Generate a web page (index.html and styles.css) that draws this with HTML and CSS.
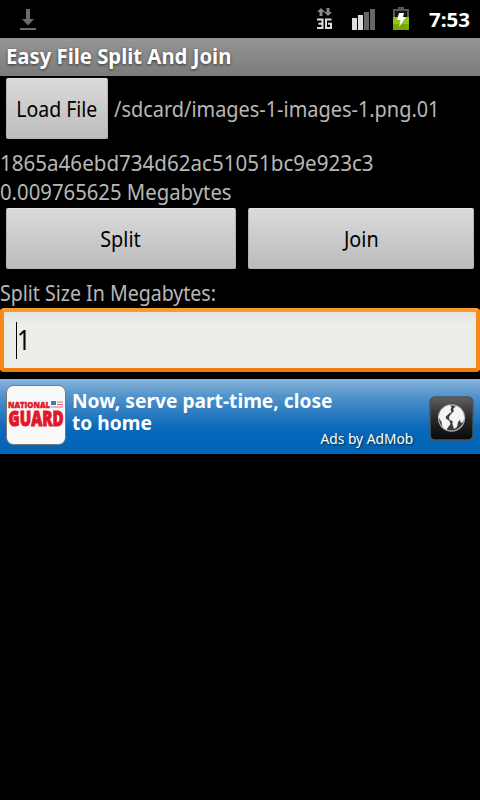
FILE: index.html
```
<!DOCTYPE html>
<html lang="en">
<head>
<meta charset="utf-8">
<title>Easy File Split And Join</title>
<link rel="stylesheet" href="styles.css">
</head>
<body>
<div class="screen">
  <header class="status">
    <svg class="download" width="18" height="22" viewBox="0 0 18 22"><path d="M7 0h4v10h4l-6 6.500L3 10h4zM1 19h16v2H1z" fill="#6b6b6b"/></svg>
    <div class="indicators">
      <svg width="18" height="24" viewBox="0 0 18 24"><path d="M5 1l4 4H6.500v4h-3V5H1zM12 9l4-4h-2.500V1h-3v4H8z" fill="#888"/><path d="M1 12.500h5.500v8.500H1M2.500 16.700h4M15.500 12.500H10V21h5v-4.300H12" fill="none" stroke="#ddd" stroke-width="2"/></svg>
      <svg width="24" height="22" viewBox="0 0 24 22"><path d="M1 9h5v12H1zM7 6h5v15H7z" fill="#ddd"/><path d="M13 3h5v18h-5zM19 0h5v21h-5z" fill="#666"/></svg>
      <svg width="18" height="24" viewBox="0 0 18 24"><path d="M6 0h6v2h5v21H1V2h5z" fill="#555"/><path d="M3 4h12v6H3z" fill="#111"/><path d="M1 10h16v13H1z" fill="#8fc412"/><path d="M1 17h16v6H1z" fill="#75a800"/><path d="M7 6h5l-1 4h3l-7 10 1.500-7H5z" fill="#fff"/></svg>
      <span class="clock"><span class="t">7:53</span></span>
    </div>
  </header>
  <h1 class="titlebar"><span class="t">Easy File Split And Join</span></h1>
  <div class="file-row">
    <button class="btn load"><span class="t">Load File</span></button>
    <span class="path t">/sdcard/images-1-images-1.png.01</span>
  </div>
  <div class="line hash"><span class="t">1865a46ebd734d62ac51051bc9e923c3</span></div>
  <div class="line size"><span class="t">0.009765625 Megabytes</span></div>
  <div class="actions">
    <button class="btn split"><span class="t">Split</span></button>
    <button class="btn join"><span class="t">Join</span></button>
  </div>
  <div class="line label"><span class="t">Split Size In Megabytes:</span></div>
  <div class="field"><i class="caret"></i><span class="t">1</span></div>
  <div class="ad">
    <svg class="logo" width="60" height="60" viewBox="0 0 60 60"><rect x=".5" y=".5" width="59" height="59" rx="7" fill="#f9f9f9" stroke="#777"/>
      <g fill="#e0172b" stroke="#e0172b" font-family="Open Sans, sans-serif" font-weight="800"><text x="2" y="23" font-size="9.500" stroke-width=".5" textLength="42" lengthAdjust="spacingAndGlyphs">NATIONAL</text><text x="2.500" y="41" font-size="21" stroke-width="1" textLength="55" lengthAdjust="spacingAndGlyphs">GUARD</text></g>
      <path d="M45 16h5v4h-5z" fill="#3f7fa5"/><path d="M51 17h6M51 19.500h6M45 22h12" stroke="#e26a76"/></svg>
    <div class="copy">
      <div class="headline"><span class="t">Now, serve part-time, close</span><br><span class="t second">to home</span></div>
      <div class="credit"><span class="t">Ads by AdMob</span></div>
    </div>
    <svg class="globe" width="45" height="45" viewBox="0 0 45 45"><defs><linearGradient id="g" x2="0" y2="1"><stop stop-color="#606060"/><stop offset=".5" stop-color="#282828"/><stop offset="1" stop-color="#080808"/></linearGradient></defs><rect x="1" y="1" width="43" height="43" rx="5" fill="url(#g)" stroke="#505458" stroke-width="1.500"/><circle cx="22.500" cy="22" r="13" fill="#3c3c3c" stroke="#aaa" stroke-width="1.300"/><path d="M9.500 21l2-6 4-4 5-2 2 2-1 3 1 2-3 2-3 3 1 2 3 2 1 3-3 4-1 2-4-3-1-5zM22 18l3-3-1-2 3-3 4 2 3 4 1.500 6-1.500 4-2 1-1-3-2 2-1 5-3 2-1.500-5v-3l-3-1-.5-3z" fill="#f4f4f4"/></svg>
  </div>
</div>
</body>
</html>
```
FILE: styles.css
```
* { box-sizing: border-box; }
body { margin: 0; background: #000; }
.screen {
  width: 480px;
  height: 800px;
  overflow: hidden;
  background: #000;
  color: #b8b8b8;
  font: 22px/29px "Noto Sans", "Open Sans", sans-serif;
}
.t { display: inline-block; white-space: nowrap; transform-origin: 0 50%; transform: scaleX(.9); }
.status { height: 38px; display: flex; justify-content: space-between; padding: 7px 9px 0 19px; }
.download { margin-top: 2px; }
.indicators { display: flex; align-items: flex-start; }
.indicators svg:nth-child(1) { margin-right: 17px; }
.indicators svg:nth-child(2) { margin: 2px 17px 0 0; }
.indicators svg:nth-child(3) { margin-right: 19px; }
.clock { width: 42px; color: #fff; font-size: 20px; font-weight: 700; line-height: 25px; }
.clock .t { transform: scaleX(1.03); }
.titlebar {
  margin: 0;
  height: 38px;
  padding-left: 6px;
  background: linear-gradient(#959595, #7b7b7b);
  color: #fff;
  font-size: 21px;
  font-weight: 700;
  line-height: 37px;
  text-shadow: 0 1px 3px #333;
}
.titlebar .t { transform: scaleX(.966); }
.file-row { height: 72px; display: flex; padding: 2px 6px 0; }
.path { margin-left: 6px; line-height: 61px; transform: scaleX(.905); }
.btn {
  height: 61px;
  padding: 0;
  border: 1px solid #b4b4b4;
  border-top-color: #e4e4e4;
  border-radius: 2px;
  background: linear-gradient(#dadada, #bcbcbc);
  color: #000;
  font: inherit;
  line-height: 59px;
}
.btn .t { transform-origin: 50% 50%; }
.load { width: 102px; display: flex; justify-content: center; }
.load .t { transform: scaleX(.885); }
.split { padding-right: 2px; }
.line { height: 29px; }
.hash .t { transform: scaleX(.935); }
.size { height: 31px; }
.size .t { transform: scaleX(.923); }
.actions { display: grid; grid-template-columns: 230px 226px; gap: 12px; padding: 0 6px; height: 70px; }
.label { height: 30px; }
.label .t { transform: scaleX(.889); }
.field {
  height: 64px;
  display: flex;
  align-items: center;
  padding-left: 12px;
  border: 4px solid #f58a16;
  border-top-color: #fb9a2c;
  border-bottom-color: #ef7d09;
  border-radius: 4px;
  background: linear-gradient(#e3e4e2, #eceeea 12px);
  color: #000;
  font-size: 28px;
}
.field .t { transform: scaleX(.85); margin-top: -2px; }
.caret { width: 1px; height: 37px; background: #000; }
.ad {
  height: 75px;
  margin-top: 7px;
  padding-left: 6px;
  display: flex;
  background: linear-gradient(#8ab5da, #4f91ca 18px, #0868b9 50px, #0065b7);
  color: #fff;
}
.logo { margin-top: 6px; }
.copy { width: 347px; padding: 11px 0 0 6px; }
.headline { height: 44px; font-size: 19px; font-weight: 700; line-height: 22px; }
.headline .t { vertical-align: top; transform: scaleX(1.01); }
.credit { display: flex; justify-content: flex-end; font-size: 14px; line-height: 10px; text-shadow: 1px 1px 2px #123; }
.credit .t { transform: scaleX(.985); transform-origin: 100% 50%; }
.globe { margin: 17px 0 0 16px; }
```
